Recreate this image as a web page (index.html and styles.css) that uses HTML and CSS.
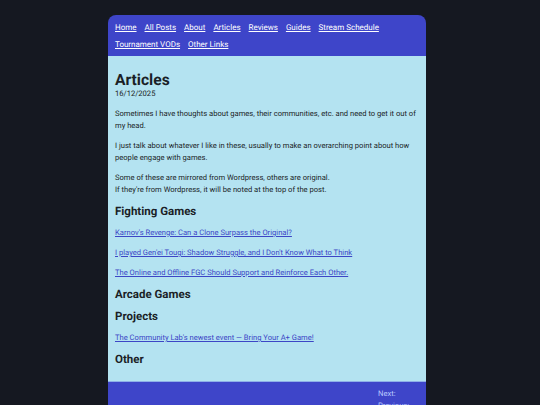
FILE: index.html
```html
<!DOCTYPE html>
<html lang="en">
<head>
<meta charset="utf-8">
<title>Articles</title>
<link rel="stylesheet" href="styles.css">
</head>
<body>
<div class="page">
  <header class="site-header">
    <nav class="nav">
      <a href="#">Home</a>
      <a href="#">All Posts</a>
      <a href="#">About</a>
      <a href="#">Articles</a>
      <a href="#">Reviews</a>
      <a href="#">Guides</a>
      <a href="#">Stream Schedule</a>
      <a href="#">Tournament VODs</a>
      <a href="#">Other Links</a>
    </nav>
  </header>
  <main class="content">
    <h1 class="title">Articles</h1>
    <div class="date">16/12/2025</div>
    <p>Sometimes I have thoughts about games, their communities, etc. and need to get it out of my head.</p>
    <p>I just talk about whatever I like in these, usually to make an overarching point about how people engage with games.</p>
    <p>Some of these are mirrored from Wordpress, others are original.<br>If they're from Wordpress, it will be noted at the top of the post.</p>
    <h2>Fighting Games</h2>
    <p class="link"><a href="#">Karnov's Revenge: Can a Clone Surpass the Original?</a></p>
    <p class="link"><a href="#">I played Gen'ei Tougi: Shadow Struggle, and I Don't Know What to Think</a></p>
    <p class="link"><a href="#">The Online and Offline FGC Should Support and Reinforce Each Other.</a></p>
    <h2>Arcade Games</h2>
    <h2>Projects</h2>
    <p class="link"><a href="#">The Community Lab's newest event — Bring Your A+ Game!</a></p>
    <h2>Other</h2>
  </main>
  <footer class="site-footer">
    <div class="pager">
      <span>Next:</span>
      <span>Previous:</span>
    </div>
  </footer>
</div>
</body>
</html>
```
FILE: styles.css
```css
html, body {
  margin: 0;
  padding: 0;
  background: #151821;
}
body {
  font-family: Roboto, "Noto Sans", sans-serif;
  color: #1b1f27;
  text-rendering: geometricPrecision;
}
.page {
  width: 318px;
  margin: 15px 0 0 108px;
  border-radius: 8px 8px 0 0;
  overflow: hidden;
}
.site-header {
  background: #3e45c9;
  padding: 4px 7px 3px;
}
.nav {
  display: flex;
  flex-wrap: wrap;
  column-gap: 8px;
  font-size: 8px;
  line-height: 17px;
}
.nav a {
  color: #ffffff;
  text-decoration: underline;
}
.content {
  background: #b4e3f1;
  padding: 13px 7px 7px;
  border-bottom: 1px solid #8fb0e8;
  font-size: 7.6px;
  line-height: 12px;
}
.title {
  margin: 0;
  font-size: 15.6px;
  line-height: 22px;
  font-weight: 700;
}
.date {
  margin: -3px 0 1px;
  font-size: 7.6px;
  line-height: 12px;
}
.content p {
  margin: 8px 0;
}
.content h2 {
  margin: 8px 0;
  font-size: 11.5px;
  line-height: 14px;
  font-weight: 700;
}
.content h2 + .link {
  margin-top: 9px;
}
.content a {
  color: #3c46c6;
}
.site-footer {
  background: #3e45c9;
  padding: 6px 7px 6px;
  height: 40px;
}
.pager {
  display: flex;
  flex-direction: column;
  align-items: flex-start;
  margin-left: 263px;
  color: #b9c9ff;
  font-size: 7.6px;
  line-height: 12px;
}
```
